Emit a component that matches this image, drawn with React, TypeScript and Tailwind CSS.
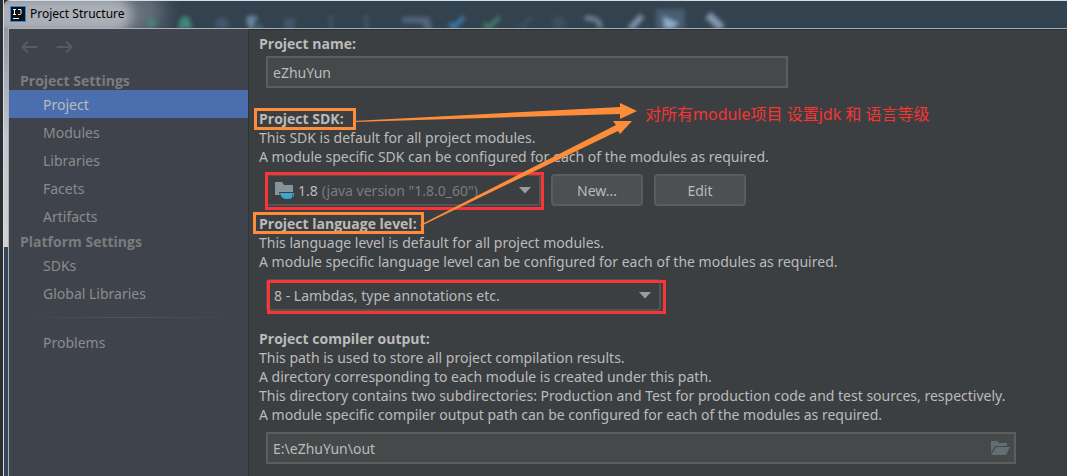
import type { ReactNode } from "react";

const projectItems = ["Project", "Modules", "Libraries", "Facets", "Artifacts"];
const platformItems = ["SDKs", "Global Libraries"];

function TitleBar() {
  return (
    <header className="relative flex h-7 items-center gap-1 overflow-hidden rounded-tl-md border-t border-[#d5dfe3] bg-[#33424f] pb-0.5 pl-1.5">
      <div className="absolute -left-8 -top-3 h-12 w-48 rounded-full bg-[#66717c] blur-[10px]" />
      <div className="absolute -left-4 -top-1 h-9 w-36 rounded-full bg-[#abb0b7] blur-[6px]" />
      <svg className="absolute left-36 top-0 h-7 w-[600px] blur-[2px]" viewBox="148 0 600 28" fill="none" aria-hidden="true">
        <path d="M147 16l12 6-12 6z" fill="#43867a" />
        <path d="M178 28q1-13 7-13t7 13z" fill="#43867a" />
        <circle cx="222" cy="23" r="7" fill="#43566a" />
        <path d="M247 15h10v5h-3v8h-4q-5-7-3-13z" fill="#6d86a0" />
        <path d="M256 22l8 6h-7z" fill="#43867a" />
        <path d="M284 17h11v11h-11z" fill="#43566a" />
        <path d="M331 14v14M366 14v14h4" stroke="#40546a" strokeWidth="4" />
        <path d="M402 16h28v4l3 8h-8l-4-6h-19z" fill="#52667b" />
        <path d="M450 22l3 5 11-11" stroke="#3c7fb4" strokeWidth="4" />
        <path d="M484 22l4 5 12-11" stroke="#41806c" strokeWidth="4" />
        <path d="M520 27l12-11" stroke="#42566a" strokeWidth="3" />
        <circle cx="559" cy="22" r="7" fill="#3c4f61" />
        <path d="M585 17q16 0 15 10" stroke="#6d8096" strokeWidth="5" />
        <path d="M630 28l12-13" stroke="#7f94ab" strokeWidth="6" />
        <path d="M656 8h29v20h-29z" fill="#485d72" />
        <path d="M663 15l16 7-6 6h-9z" fill="#8fabc8" />
        <path d="M708 14l14 13" stroke="#8398b0" strokeWidth="8" />
      </svg>
      <svg className="relative h-4 w-4 shrink-0" viewBox="0 0 16 16" aria-hidden="true">
        <rect width="16" height="16" fill="#2c84ee" />
        <rect x="1" y="1" width="14" height="14" fill="#111" />
        <path d="M3 3.500h3M4.500 3.500v5M3 8.500h3M8 3.500h3v4q0 1-1.500 1H8M3 12.500h6" stroke="#fff" fill="none" />
      </svg>
      <h1 className="relative font-['Noto_Sans',sans-serif] text-xs text-black">Project Structure</h1>
    </header>
  );
}

function NavItem({ label, active }: { label: string; active?: boolean }) {
  return (
    <a
      href="#"
      className={
        active
          ? "flex h-7 items-center bg-[#4b6eaf] pl-[34px] text-[#bbbbbb]"
          : "flex h-7 items-center pl-[34px] text-[#8c8c8c]"
      }
    >
      {label}
    </a>
  );
}

function NavHeading({ children }: { children: ReactNode }) {
  return (
    <h2 className="flex h-[21px] items-end pl-[11px] font-['Open_Sans',sans-serif] font-bold text-[#7b7c7e]">
      {children}
    </h2>
  );
}

function Sidebar() {
  return (
    <nav className="w-[240px] shrink-0 border-r border-[#323436] bg-[#3f434c]">
      <div className="flex h-10 items-center gap-[18px] pb-1 pl-3 text-[#5b5b5b]">
        <button type="button" aria-label="Back">
          <svg className="h-4 w-[17px]" viewBox="0 0 17 16" fill="none" stroke="currentColor" strokeWidth="2">
            <path d="M16.500 8H2M7 2.500L1.500 8L7 13.500" />
          </svg>
        </button>
        <button type="button" aria-label="Forward">
          <svg className="h-4 w-[17px]" viewBox="0 0 17 16" fill="none" stroke="currentColor" strokeWidth="2">
            <path d="M.5 8H15M10 2.500L15.500 8L10 13.500" />
          </svg>
        </button>
      </div>
      <NavHeading>Project Settings</NavHeading>
      {projectItems.map((item) => (
        <NavItem key={item} label={item} active={item === "Project"} />
      ))}
      <NavHeading>Platform Settings</NavHeading>
      {platformItems.map((item) => (
        <NavItem key={item} label={item} />
      ))}
      <div className="mx-2.5 my-2.5 h-px bg-linear-to-r from-transparent via-[#5a5450] to-transparent" />
      <NavItem label="Problems" />
    </nav>
  );
}

function Caret() {
  return (
    <svg className="pointer-events-none absolute right-2 top-2.5 h-2 w-3" viewBox="0 0 12 8" aria-hidden="true">
      <path d="M0 1h12L6 7.500z" fill="#9a9da0" />
    </svg>
  );
}

function Highlight({ className }: { className: string }) {
  return <div className={`pointer-events-none absolute border-[3px] ${className}`} />;
}

export default function App() {
  return (
    <div className="flex min-h-screen bg-[#2f3337] font-['Noto_Sans','Noto_Sans_CJK_SC',sans-serif] text-sm/[19px] text-[#bbbbbb]">
      <div className="w-1 shrink-0 border-r border-[#d5dfe3] bg-[#2b2e33]" />
      <div className="flex min-w-0 flex-1 flex-col">
        <TitleBar />
        <div className="flex flex-1">
          <div className="flex w-1 shrink-0 flex-col bg-[#33465a]">
            <div className="h-[219px] bg-linear-to-b from-[#8f98a2] via-[#c3c6ca] to-[#d0d2d5]" />
          </div>
          <div className="flex min-w-0 flex-1 border-l border-t border-[#a7b0b6]">
            <Sidebar />
            <main className="relative min-w-0 flex-1 border-t border-[#2b2d2e] bg-[#3c3f41] pb-3 pl-2.5 pt-1">
              <label htmlFor="name" className="block font-['Open_Sans',sans-serif] font-bold">Project name:</label>
              <input
                id="name"
                defaultValue="eZhuYun"
                className="ml-[7px] mt-[3px] block h-8 w-[522px] border-2 border-[#5b5d5e] bg-[#45494a] px-[5px]"
              />

              <div className="relative mt-[21px] w-fit">
                <label htmlFor="sdk" className="block font-['Open_Sans',sans-serif] font-bold">Project SDK:</label>
                <Highlight className="-left-[5px] -top-px h-[22px] w-[102px] border-[#ff8c38]" />
              </div>
              <p>This SDK is default for all project modules.</p>
              <p>A module specific SDK can be configured for each of the modules as required.</p>
              <div className="ml-[7px] mt-2 flex">
                <div className="relative flex h-8 w-[275px] items-center rounded border-2 border-[#515456] pl-1.5">
                  <svg className="h-[18px] w-5 shrink-0" viewBox="0 0 20 18" aria-hidden="true">
                    <path d="M1 1h7l2 3h9v10H1z" fill="#87939a" />
                    <path d="M5 11h15v5h-2q-2 2-5 2-7 0-8-7z" fill="#3c3f41" />
                    <path d="M6 12h12v5q-2 1-5 1-6 0-7-6z" fill="#3fa6d2" />
                    <path d="M17 12.500h2.500v2.500H17" fill="none" stroke="#3fa6d2" />
                  </svg>
                  <span className="ml-1">1.8</span>
                  <select id="sdk" className="h-full flex-1 appearance-none pl-1 text-[#7a7c7d]">
                    <option>(java version "1.8.0_60")</option>
                  </select>
                  <Caret />
                  <Highlight className="-left-[3px] -top-1 h-[38px] w-[279px] border-[#fb3535]" />
                </div>
                <button type="button" className="ml-2.5 h-8 w-[92px] rounded border-2 border-[#5a5d5e] bg-[#4c5052]">New...</button>
                <button type="button" className="ml-[11px] h-8 w-[92px] rounded border-2 border-[#5a5d5e] bg-[#4c5052]">Edit</button>
              </div>

              <div className="relative mt-2 w-fit">
                <label htmlFor="level" className="block font-['Open_Sans',sans-serif] font-bold">Project language level:</label>
                <Highlight className="-left-[6px] -top-[2px] h-[22px] w-[171px] border-[#ff8c38]" />
              </div>
              <p>This language level is default for all project modules.</p>
              <p>A module specific language level can be configured for each of the modules as required.</p>
              <div className="relative ml-[7px] mt-2 h-8 w-[395px] rounded border-2 border-[#515456]">
                <select id="level" className="h-full w-full appearance-none pl-1.5">
                  <option>8 - Lambdas, type annotations etc.</option>
                </select>
                <Caret />
                <Highlight className="-left-px -top-px h-[34px] w-[399px] border-[#fb3535]" />
              </div>

              <label htmlFor="output" className="mt-[18px] block font-['Open_Sans',sans-serif] font-bold">Project compiler output:</label>
              <p>This path is used to store all project compilation results.</p>
              <p>A directory corresponding to each module is created under this path.</p>
              <p>This directory contains two subdirectories: Production and Test for production code and test sources, respectively.</p>
              <p>A module specific compiler output path can be configured for each of the modules as required.</p>
              <div className="relative ml-[7px] mr-[51px] mt-2">
                <input
                  id="output"
                  defaultValue="E:\eZhuYun\out"
                  className="block h-8 w-full border-2 border-[#5b5d5e] bg-[#45494a] px-[5px]"
                />
                <button type="button" aria-label="Browse" className="absolute right-1.5 top-2">
                  <svg className="h-4 w-5" viewBox="0 0 20 16" fill="#646d72">
                    <path d="M1 1h6l2 2h8v3H5L1 13z" />
                    <path d="M6 7h14l-4 8H1z" />
                  </svg>
                </button>
              </div>

              {/* notes drawn over the form */}
              <svg className="pointer-events-none absolute left-0 top-0 h-[220px] w-[400px]" viewBox="249 30 400 220" fill="#ff8c38" aria-hidden="true">
                <path d="M353 121L620 107V103L637 111L620 119V114L353 122z" />
                <path d="M420 225L616 125L613 121L632 121L620 134L618 131L421 226z" />
              </svg>
              <p className="absolute left-[396px] top-[75px] whitespace-nowrap text-base/[19px] text-[#f53434]">
                对所有module项目 设置jdk 和 语言等级
              </p>
            </main>
          </div>
        </div>
      </div>
    </div>
  );
}
